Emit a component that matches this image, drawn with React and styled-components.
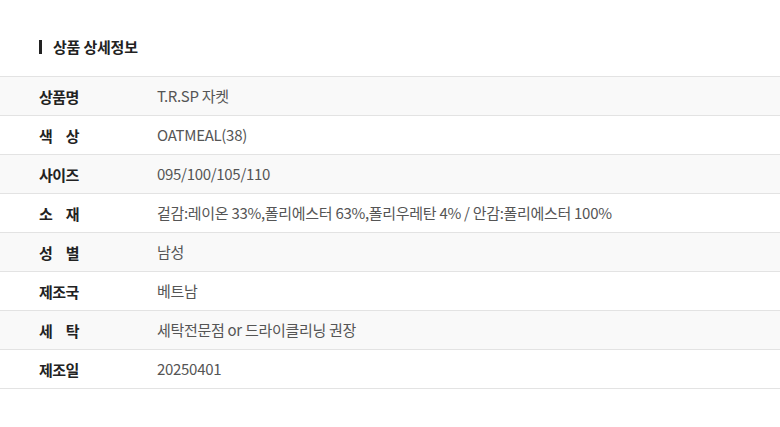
import React from 'react';
import styled, { createGlobalStyle } from 'styled-components';

const GlobalStyle = createGlobalStyle`
    body {
        margin: 0;
        background: #fff;
        font-family: 'Noto Sans CJK KR', 'Noto Sans', sans-serif;
    }
`;

const Section = styled.section`
    width: 780px;
    padding-top: 36px;
`;

const Title = styled.h3`
    display: flex;
    align-items: center;
    gap: 11px;
    margin: 0 0 19px 39px;
    height: 21px;
    font-size: 15px;
    font-weight: 700;
    color: #222;
    letter-spacing: -0.2px;

    &::before {
        content: '';
        width: 3px;
        height: 14px;
        background: #222;
    }
`;

const Table = styled.div`
    border-top: 1px solid #e3e3e3;
`;

const Row = styled.div`
    display: flex;
    align-items: center;
    height: 38px;
    border-bottom: 1px solid #e3e3e3;
    background: ${p => (p.$shade ? '#f9f9f9' : '#fff')};
`;

const Label = styled.div`
    display: flex;
    justify-content: ${p => (p.$spread ? 'space-between' : 'flex-start')};
    width: 40px;
    margin-left: 39px;
    margin-right: 78px;
    font-size: 15px;
    font-weight: 700;
    color: #222;
    letter-spacing: -0.6px;
    white-space: nowrap;
`;

const Value = styled.div`
    font-size: 15px;
    color: #555;
    letter-spacing: -0.3px;
    margin-top: -1px;
`;

const rows = [
    ['상품명', 'T.R.SP 자켓'],
    ['색 상', 'OATMEAL(38)'],
    ['사이즈', '095/100/105/110'],
    ['소 재', '겉감:레이온 33%,폴리에스터 63%,폴리우레탄 4% / 안감:폴리에스터 100%'],
    ['성 별', '남성'],
    ['제조국', '베트남'],
    ['세 탁', '세탁전문점 or 드라이클리닝 권장'],
    ['제조일', '20250401'],
];

export default function App() {
    return (
        <>
            <GlobalStyle />
            <Section>
                <Title>상품 상세정보</Title>
                <Table>
                    {rows.map(([label, value], i) => {
                        const parts = label.split(' ');
                        return (
                            <Row key={label} $shade={i % 2 === 0}>
                                <Label $spread={parts.length > 1}>
                                    {parts.map(p => <span key={p}>{p}</span>)}
                                </Label>
                                <Value>{value}</Value>
                            </Row>
                        );
                    })}
                </Table>
            </Section>
        </>
    );
}
